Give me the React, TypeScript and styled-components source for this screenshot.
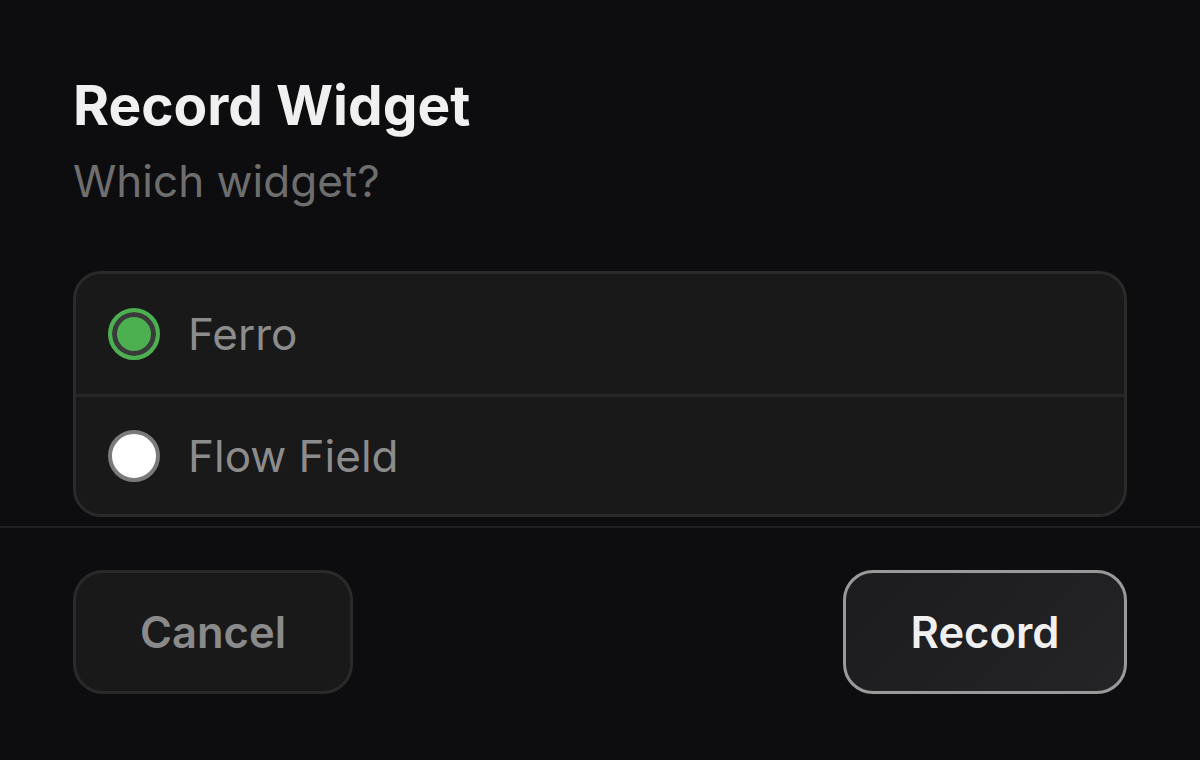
import React, { useState } from 'react';
import styled, { createGlobalStyle } from 'styled-components';

const GlobalStyle = createGlobalStyle`
  html, body {
    margin: 0;
    padding: 0;
    background: #0d0d0f;
  }
  * {
    box-sizing: border-box;
  }
`;

const Dialog = styled.div`
  width: 1200px;
  height: 760px;
  display: flex;
  flex-direction: column;
  background: #0d0d0f;
  font-family: Inter, "Noto Sans", sans-serif;
`;

const Body = styled.div`
  padding: 73px 73px 9px;
  display: flex;
  flex-direction: column;
`;

const Title = styled.h2`
  margin: 0;
  font-size: 55px;
  line-height: 64px;
  font-weight: 700;
  color: #f0f0f0;
`;

const Subtitle = styled.p`
  margin: 20px 0 0;
  font-size: 44px;
  line-height: 48px;
  font-weight: 400;
  color: #6e6e6e;
`;

const OptionList = styled.div`
  margin-top: 66px;
  border: 3px solid #2a2a2b;
  border-radius: 28px;
  background: #19191a;
  overflow: hidden;
`;

const Option = styled.label<{ $first?: boolean }>`
  height: 120px;
  display: flex;
  align-items: center;
  gap: 28px;
  padding-left: 32px;
  border-top: ${(p) => (p.$first ? 'none' : '3px solid #262627')};
  cursor: pointer;
`;

const Radio = styled.span<{ $checked: boolean }>`
  width: 52px;
  height: 52px;
  border-radius: 50%;
  flex-shrink: 0;
  border: 4px solid ${(p) => (p.$checked ? '#4caf50' : '#7a7a7a')};
  background: ${(p) => (p.$checked ? '#4caf50' : '#ffffff')};
  box-shadow: ${(p) => (p.$checked ? 'inset 0 0 0 5px #3a3a3b' : 'none')};
`;

const OptionLabel = styled.span`
  font-size: 44px;
  line-height: 48px;
  color: #8c8c8c;
`;

const Footer = styled.div`
  border-top: 2px solid #1f1f21;
  padding: 42px 73px 0;
  display: flex;
  justify-content: space-between;
`;

const Button = styled.button<{ $primary?: boolean }>`
  height: 124px;
  width: ${(p) => (p.$primary ? '284px' : '280px')};
  border-radius: 30px;
  border: 3px solid ${(p) => (p.$primary ? '#9a9a9a' : '#2a2a2b')};
  background: ${(p) =>
    p.$primary ? 'linear-gradient(135deg, #1c1c1e, #242426)' : '#19191a'};
  color: ${(p) => (p.$primary ? '#f0f0f0' : '#8a8a8a')};
  font-family: Inter, "Noto Sans", sans-serif;
  font-size: 43.5px;
  font-weight: 600;
  cursor: pointer;
`;

const widgets = ['Ferro', 'Flow Field'];

export default function App() {
  const [selected, setSelected] = useState('Ferro');

  return (
    <Dialog>
      <GlobalStyle />
      <Body>
        <Title>Record Widget</Title>
        <Subtitle>Which widget?</Subtitle>
        <OptionList>
          {widgets.map((w, i) => (
            <Option key={w} $first={i === 0} onClick={() => setSelected(w)}>
              <Radio $checked={selected === w} />
              <OptionLabel>{w}</OptionLabel>
            </Option>
          ))}
        </OptionList>
      </Body>
      <Footer>
        <Button>Cancel</Button>
        <Button $primary>Record</Button>
      </Footer>
    </Dialog>
  );
}
